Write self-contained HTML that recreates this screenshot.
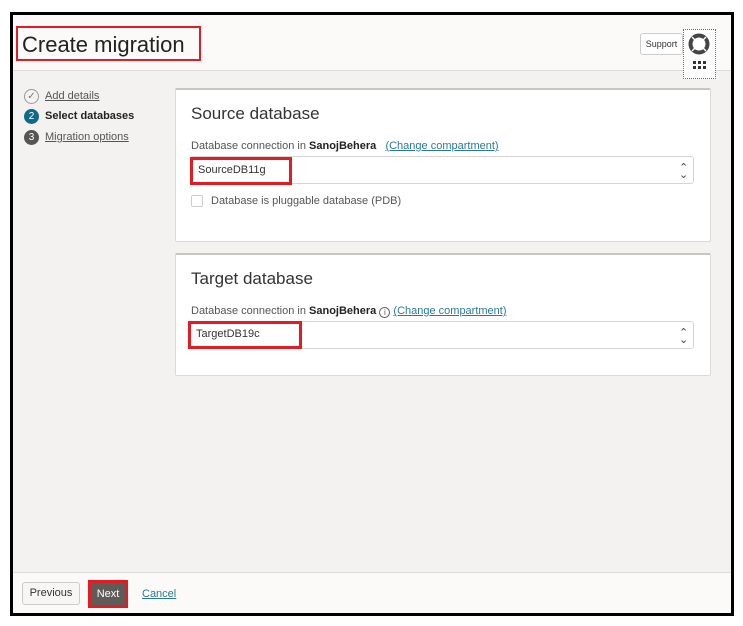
<!DOCTYPE html>
<html><head><style>
*{margin:0;padding:0;box-sizing:border-box}
body{width:743px;height:626px;background:#fff;font-family:"Liberation Sans",sans-serif;position:relative;overflow:hidden;color:#161513}
.a{position:absolute}
.frame{left:10px;top:12px;width:724px;height:604px;border:3px solid #000;background:#f3f2f1}
.card{background:#fff;border:1px solid #dcdad7;border-top:2px solid #c9c6c2;border-radius:2px}
.lbl{font-size:11px;color:#555}
.lbl b{color:#222}
.lnk{color:#2a7a9b;text-decoration:underline}
.sel{background:#fff;border:1px solid #d7d5d2;border-radius:3px;font-size:11px;color:#333}
.red{border:3px solid #e31b23}
</style></head><body>
<div class="a frame"></div>
<div class="a" style="left:13px;top:15px;width:718px;height:56px;background:#fbfaf9;border-bottom:1px solid #dedcd9"></div>
<div class="a red" style="left:16px;top:26px;width:185px;height:35px;border-width:2px"></div>
<div class="a" style="left:22px;top:32px;font-size:22px;color:#222">Create migration</div>
<div class="a" style="left:640px;top:33px;width:43px;height:22px;border:1px solid #ccc;border-radius:3px;background:#fff;font-size:9px;line-height:20px;text-align:center;color:#333">Support</div>
<div class="a" style="left:683px;top:29px;width:33px;height:50px;border:1px dotted #4a7a9a;background:#fff"></div>
<svg class="a" style="left:686px;top:32px" width="27" height="44" viewBox="0 0 27 44"><circle cx="13" cy="12" r="8.5" fill="none" stroke="#444" stroke-width="4"/><g stroke="#fff" stroke-width="1.5"><line x1="6" y1="5" x2="9" y2="8"/><line x1="20" y1="5" x2="17" y2="8"/><line x1="6" y1="19" x2="9" y2="16"/><line x1="20" y1="19" x2="17" y2="16"/></g><g fill="#333"><rect x="7" y="29" width="3" height="3"/><rect x="12" y="29" width="3" height="3"/><rect x="17" y="29" width="3" height="3"/><rect x="7" y="34" width="3" height="3"/><rect x="12" y="34" width="3" height="3"/><rect x="17" y="34" width="3" height="3"/></g></svg>
<!-- steps -->
<div class="a" style="left:24px;top:89px;width:15px;height:15px;border:1px solid #999;border-radius:50%;font-size:10px;line-height:13px;text-align:center;color:#777">✓</div>
<div class="a" style="left:45px;top:90px;font-size:11px;color:#555;text-decoration:underline">Add details</div>
<div class="a" style="left:24px;top:109px;width:15px;height:15px;background:#0f6a8a;border-radius:50%;font-size:10px;line-height:15px;text-align:center;color:#fff">2</div>
<div class="a" style="left:45px;top:110px;font-size:11px;font-weight:bold;color:#222">Select databases</div>
<div class="a" style="left:24px;top:130px;width:15px;height:15px;background:#555;border-radius:50%;font-size:10px;line-height:15px;text-align:center;color:#fff">3</div>
<div class="a" style="left:45px;top:131px;font-size:11px;color:#555;text-decoration:underline">Migration options</div>
<!-- source -->
<div class="a card" style="left:175px;top:88px;width:536px;height:154px"></div>
<div class="a" style="left:191px;top:104px;font-size:17px;color:#333">Source database</div>
<div class="a lbl" style="left:191px;top:140px">Database connection in <b>SanojBehera</b> &nbsp;&nbsp;<span class="lnk">(Change compartment)</span></div>
<div class="a sel" style="left:190px;top:156px;width:504px;height:28px"></div>
<div class="a" style="left:679px;top:161px;font-size:11px;color:#444">⌃</div><div class="a" style="left:679px;top:168px;font-size:11px;color:#444">⌄</div>
<div class="a red" style="left:190px;top:157px;width:102px;height:28px"></div>
<div class="a" style="left:198px;top:164px;font-size:11px;color:#333">SourceDB11g</div>
<div class="a" style="left:191px;top:195px;width:12px;height:12px;border:1px solid #ccc;border-radius:2px;background:#fff"></div>
<div class="a" style="left:211px;top:195px;font-size:11px;color:#555">Database is pluggable database (PDB)</div>
<!-- target -->
<div class="a card" style="left:175px;top:253px;width:536px;height:123px"></div>
<div class="a" style="left:191px;top:269px;font-size:17px;color:#333">Target database</div>
<div class="a lbl" style="left:191px;top:305px">Database connection in <b>SanojBehera</b> <span style="display:inline-block;width:11px;height:11px;border:1px solid #666;border-radius:50%;font-size:8px;line-height:9px;text-align:center;vertical-align:-1px">i</span> <span class="lnk">(Change compartment)</span></div>
<div class="a sel" style="left:188px;top:321px;width:506px;height:28px"></div>
<div class="a" style="left:679px;top:326px;font-size:11px;color:#444">⌃</div><div class="a" style="left:679px;top:333px;font-size:11px;color:#444">⌄</div>
<div class="a red" style="left:188px;top:321px;width:114px;height:28px"></div>
<div class="a" style="left:196px;top:328px;font-size:11px;color:#333">TargetDB19c</div>
<!-- footer -->
<div class="a" style="left:13px;top:572px;width:718px;height:41px;background:#fbfaf9;border-top:1px solid #dedcd9"></div>
<div class="a" style="left:22px;top:582px;width:58px;height:23px;border:1px solid #ccc;border-radius:3px;background:#f7f6f5;font-size:11px;line-height:21px;text-align:center;color:#333">Previous</div>
<div class="a" style="left:88px;top:580px;width:40px;height:28px;border:3px solid #e31b23;background:#5f5b57;font-size:11px;line-height:22px;text-align:center;color:#fff">Next</div>
<div class="a" style="left:142px;top:588px;font-size:11px" ><span class="lnk">Cancel</span></div>
</body></html>
